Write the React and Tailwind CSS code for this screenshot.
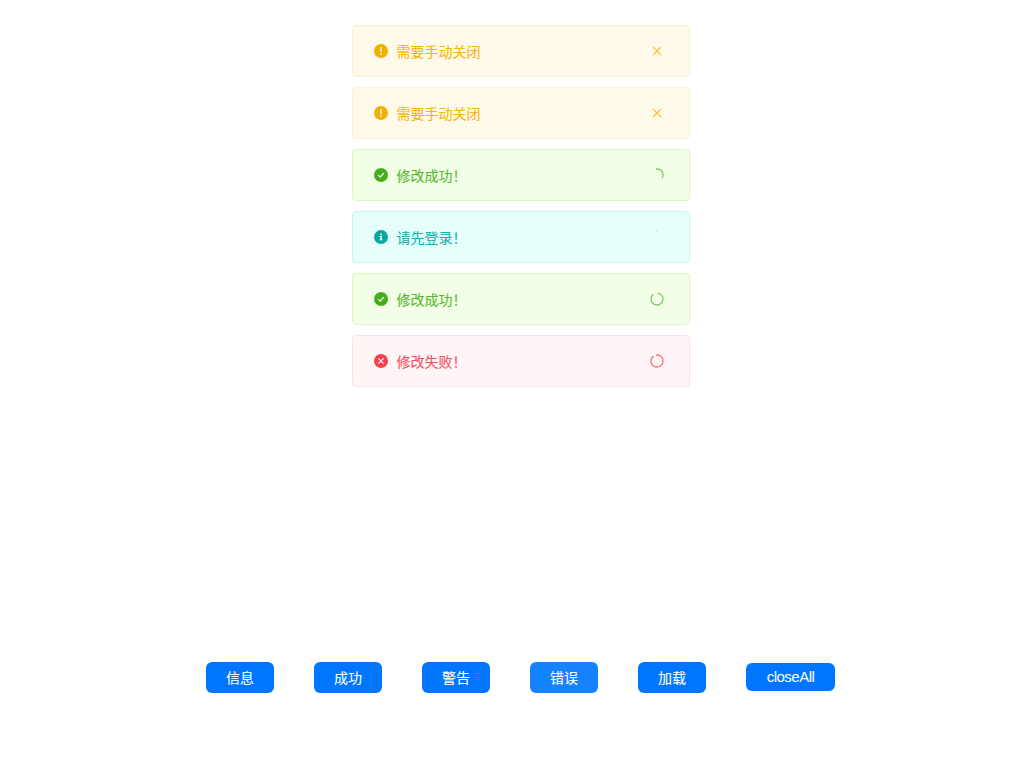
import React from "react";

const FONT = '"Liberation Sans", "Noto Sans CJK SC", sans-serif';

function WarnIcon() {
  return (
    <svg width="14" height="14" viewBox="0 0 14 14" className="shrink-0">
      <circle cx="7" cy="7" r="7" fill="#f0b000" />
      <rect x="6.3" y="3" width="1.4" height="5" rx="0.5" fill="#fff" />
      <circle cx="7" cy="9.9" r="0.85" fill="#fff" />
    </svg>
  );
}

function SuccessIcon() {
  return (
    <svg width="14" height="14" viewBox="0 0 14 14" className="shrink-0">
      <circle cx="7" cy="7" r="7" fill="#42ae1c" />
      <path d="M4.2 7.2 L6.2 9.1 L9.8 5.2" fill="none" stroke="#fff" strokeWidth="1.1" />
    </svg>
  );
}

function InfoIcon() {
  return (
    <svg width="14" height="14" viewBox="0 0 14 14" className="shrink-0">
      <circle cx="7" cy="7" r="7" fill="#0aa6a6" />
      <rect x="6.3" y="6" width="1.5" height="4" fill="#fff" />
      <rect x="5.6" y="9.4" width="2.9" height="0.9" fill="#fff" />
      <rect x="5.6" y="6" width="1.5" height="0.9" fill="#fff" />
      <circle cx="7" cy="4.3" r="0.9" fill="#fff" />
    </svg>
  );
}

function ErrorIcon() {
  return (
    <svg width="14" height="14" viewBox="0 0 14 14" className="shrink-0">
      <circle cx="7" cy="7" r="7" fill="#f5414f" />
      <path d="M4.4 4.4 L9.6 9.6 M9.6 4.4 L4.4 9.6" fill="none" stroke="#fff" strokeWidth="1.1" />
    </svg>
  );
}

function CloseIcon() {
  return (
    <svg width="14" height="14" viewBox="0 0 14 14">
      <path d="M3 3 L11 11 M11 3 L3 11" fill="none" stroke="#f9c342" strokeWidth="1.2" />
    </svg>
  );
}

// ring spinner, dash is the visible part of the circle and rot where it starts
function Spinner({ color, dash, rot }) {
  const r = 6;
  const len = 2 * Math.PI * r;
  return (
    <svg width="14" height="14" viewBox="0 0 14 14">
      <circle
        cx="7"
        cy="7"
        r={r}
        fill="none"
        stroke={color}
        strokeWidth="1.3"
        strokeDasharray={`${len * dash} ${len}`}
        transform={`rotate(${rot} 7 7)`}
      />
    </svg>
  );
}

const toasts = [
  { icon: <WarnIcon />, text: "需要手动关闭", box: "bg-[#fff9e9] border-[#fff1cc]", color: "text-[#f5b50f]", action: <CloseIcon /> },
  { icon: <WarnIcon />, text: "需要手动关闭", box: "bg-[#fff9e9] border-[#fff1cc]", color: "text-[#f5b50f]", action: <CloseIcon /> },
  { icon: <SuccessIcon />, text: "修改成功！", box: "bg-[#f2ffe6] border-[#dbf8bd]", color: "text-[#55b82e]", action: <Spinner color="#7ec563" dash={0.36} rot={-100} /> },
  { icon: <InfoIcon />, text: "请先登录！", box: "bg-[#e6fffc] border-[#bff8f5]", color: "text-[#14b0ae]", action: <Spinner color="#70d4d4" dash={0.02} rot={-92} /> },
  { icon: <SuccessIcon />, text: "修改成功！", box: "bg-[#f2ffe6] border-[#dbf8bd]", color: "text-[#55b82e]", action: <Spinner color="#7ec563" dash={0.86} rot={-85} /> },
  { icon: <ErrorIcon />, text: "修改失败！", box: "bg-[#fff5f6] border-[#ffe0e3]", color: "text-[#f5505e]", action: <Spinner color="#f5707a" dash={0.91} rot={-100} /> },
];

const buttons = ["信息", "成功", "警告", "错误", "加载"];

export default function App() {
  return (
    <div className="min-h-screen bg-white pl-5 pt-[25px]" style={{ fontFamily: FONT }}>
      <div className="flex flex-col items-center gap-[10px]">
        {toasts.map((t, i) => (
          <div key={i} className={`flex h-[52px] w-[338px] items-center rounded border pl-[21px] pr-[24.5px] ${t.box}`}>
            {t.icon}
            <span className={`ml-[9px] flex-1 pt-[2px] text-sm [-webkit-text-stroke:0.1px] ${t.color}`}>{t.text}</span>
            {t.action}
          </div>
        ))}
      </div>

      <div className="mt-[275px] flex items-center justify-center gap-10">
        {buttons.map((label, i) => (
          <button
            key={label}
            className={`h-[31px] w-[68px] rounded-md text-sm text-white [-webkit-text-stroke:0.1px] ${i === 3 ? "bg-[#1583fe]" : "bg-[#0076fe]"}`}
          >
            {label}
          </button>
        ))}
        <button className="mb-px h-[28px] w-[89px] rounded-md bg-[#0076fe] text-[15px] tracking-[-0.5px] text-white">closeAll</button>
      </div>
    </div>
  );
}
